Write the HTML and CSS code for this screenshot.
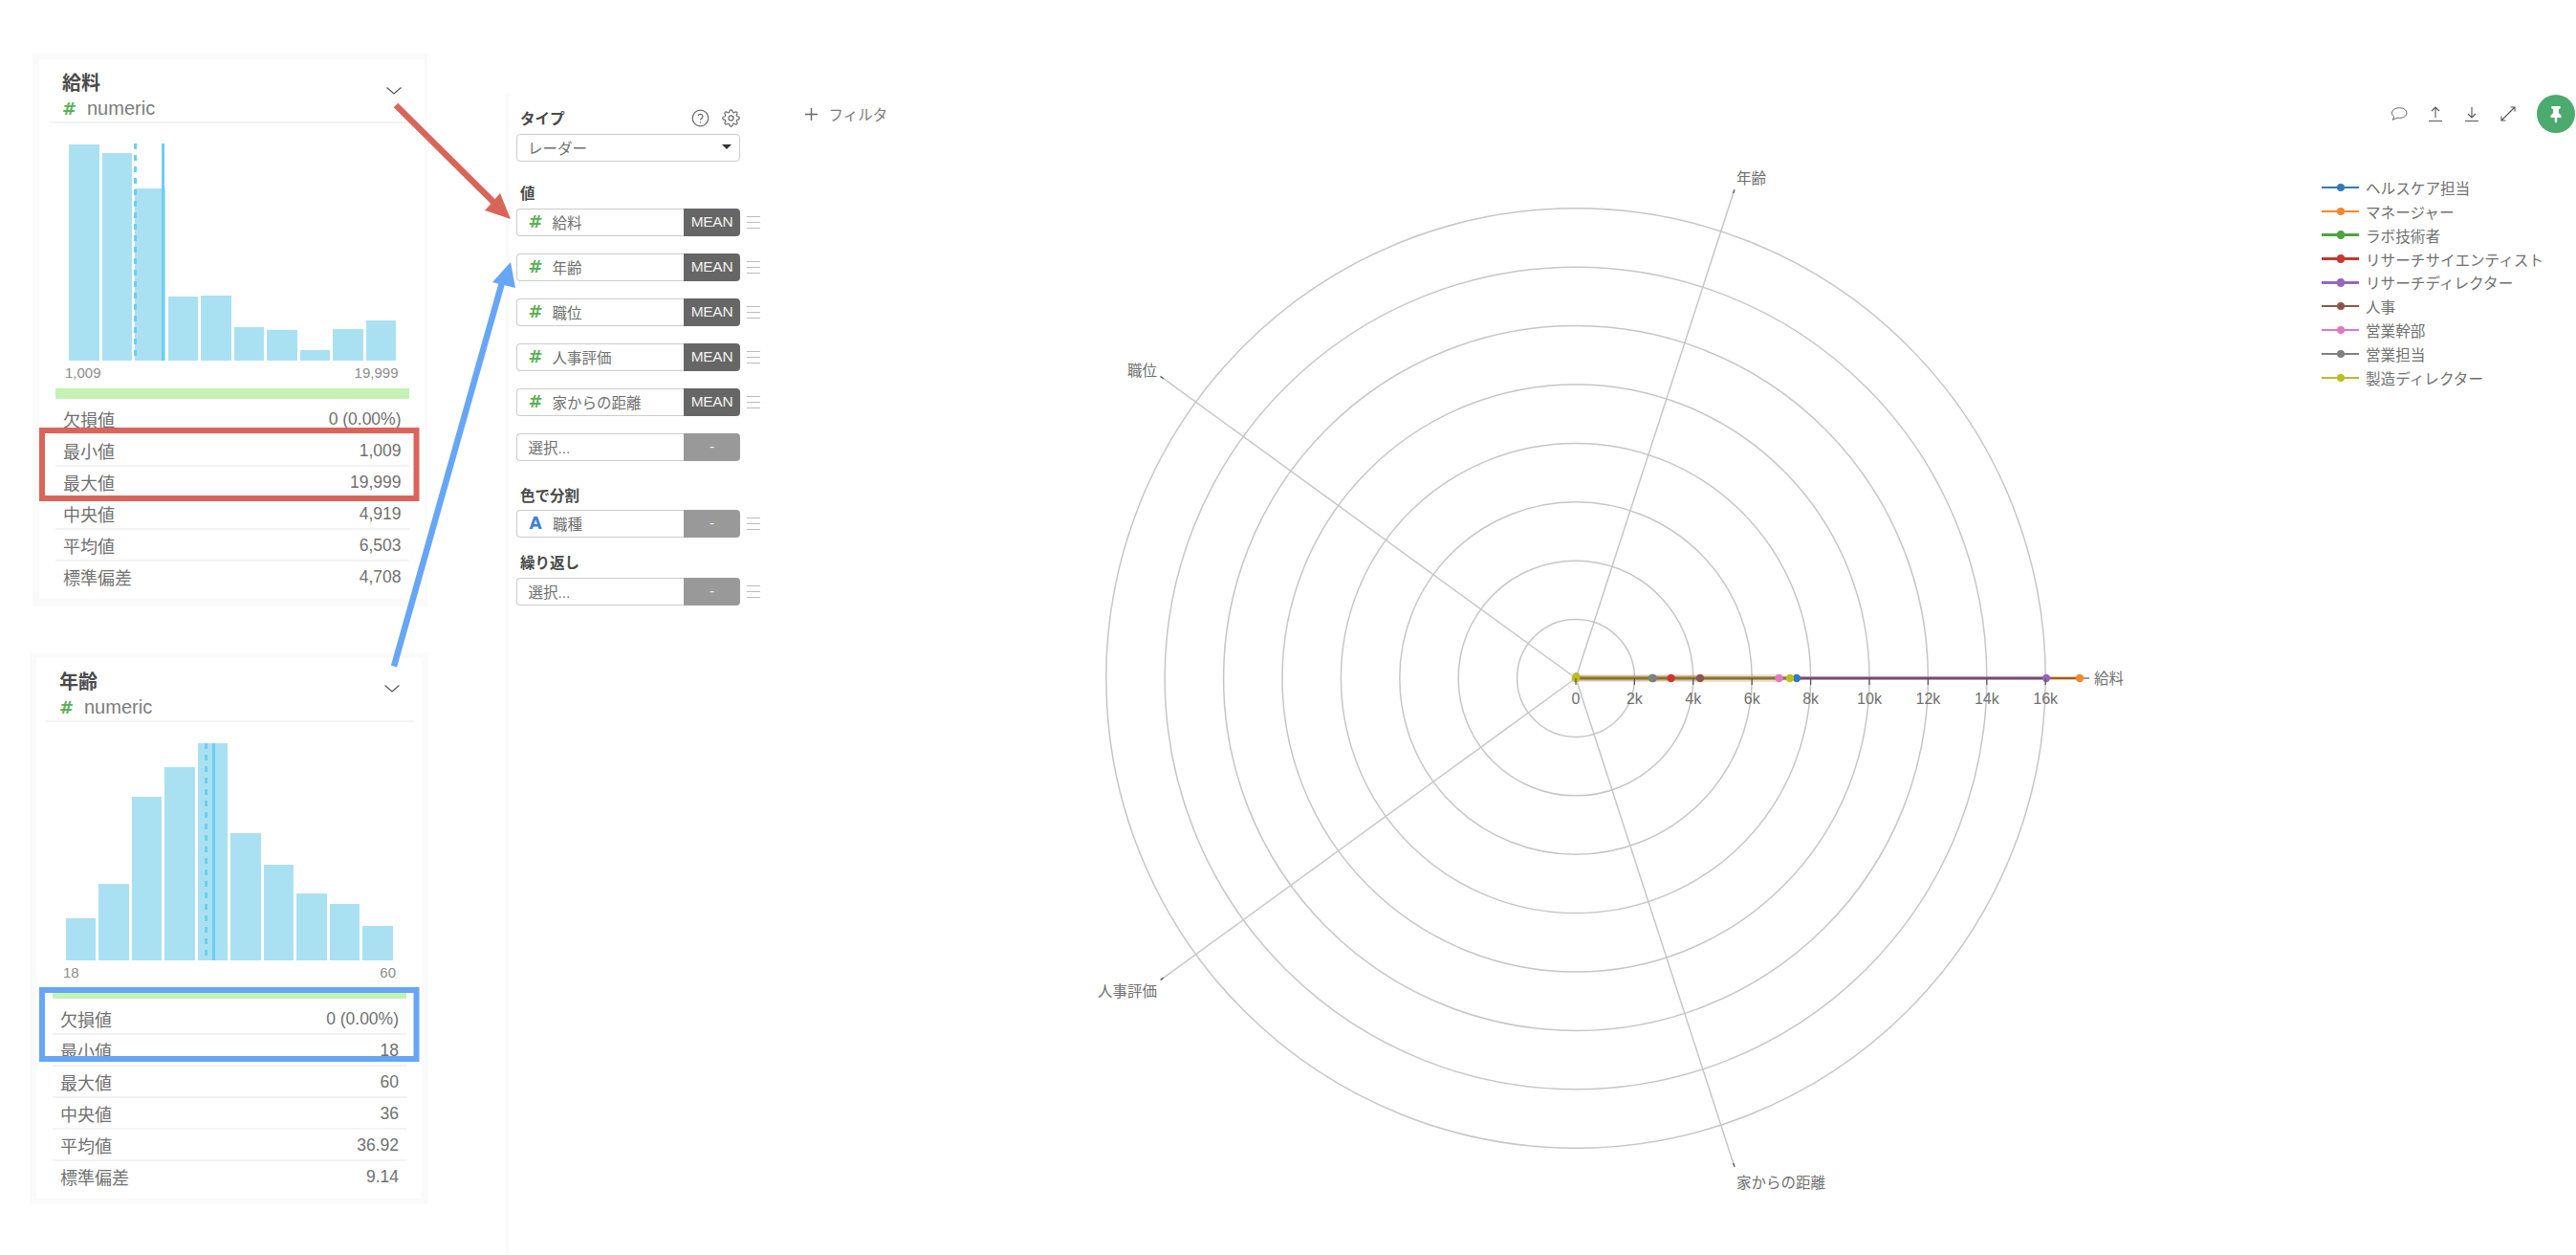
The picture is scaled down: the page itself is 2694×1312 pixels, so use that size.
FILE: index.html
```html
<!DOCTYPE html>
<html lang="ja">
<head>
<meta charset="utf-8">
<title>レーダー</title>
<link rel="stylesheet" href="styles.css">
</head>
<body>
<div class="page">
  <aside class="sidebar">
    <section class="card card-salary">
      <header class="card-head">
        <div class="card-heading">
          <div class="card-title">給料</div>
          <div class="card-type"><span class="hash">#</span><span>numeric</span></div>
        </div>
        <svg class="chevron" viewBox="0 0 16 8"><polyline points="0.5,0.5 8,7 15.5,0.5"/></svg>
      </header>
      <div class="hist">
        <i class="bar" style="height:226.5px"></i><i class="bar" style="height:216.7px"></i><i class="bar" style="height:180px"></i><i class="bar" style="height:67.3px"></i><i class="bar" style="height:68px"></i><i class="bar" style="height:34.7px"></i><i class="bar" style="height:31.8px"></i><i class="bar" style="height:11px"></i><i class="bar" style="height:33.5px"></i><i class="bar" style="height:41.6px"></i>
        <i class="mark-median" style="left:67.5px"></i><i class="mark-mean" style="left:96.5px"></i>
      </div>
      <div class="hist-range"><span>1,009</span><span>19,999</span></div>
      <div class="valid-bar"></div>
      <dl class="stats">
        <div class="stat"><dt>欠損値</dt><dd>0 (0.00%)</dd></div>
        <div class="stat"><dt>最小値</dt><dd>1,009</dd></div>
        <div class="stat"><dt>最大値</dt><dd>19,999</dd></div>
        <div class="stat"><dt>中央値</dt><dd>4,919</dd></div>
        <div class="stat"><dt>平均値</dt><dd>6,503</dd></div>
        <div class="stat"><dt>標準偏差</dt><dd>4,708</dd></div>
      </dl>
    </section>

    <section class="card card-age">
      <header class="card-head">
        <div class="card-heading">
          <div class="card-title">年齢</div>
          <div class="card-type"><span class="hash">#</span><span>numeric</span></div>
        </div>
        <svg class="chevron" viewBox="0 0 16 8"><polyline points="0.5,0.5 8,7 15.5,0.5"/></svg>
      </header>
      <div class="hist">
        <i class="bar" style="height:43.6px"></i><i class="bar" style="height:80px"></i><i class="bar" style="height:171px"></i><i class="bar" style="height:202px"></i><i class="bar" style="height:226.5px"></i><i class="bar" style="height:133px"></i><i class="bar" style="height:100px"></i><i class="bar" style="height:70px"></i><i class="bar" style="height:58.5px"></i><i class="bar" style="height:35.7px"></i>
        <i class="mark-median" style="left:145px"></i><i class="mark-mean" style="left:153px"></i>
      </div>
      <div class="hist-range"><span>18</span><span>60</span></div>
      <div class="valid-bar"></div>
      <dl class="stats">
        <div class="stat"><dt>欠損値</dt><dd>0 (0.00%)</dd></div>
        <div class="stat"><dt>最小値</dt><dd>18</dd></div>
        <div class="stat"><dt>最大値</dt><dd>60</dd></div>
        <div class="stat"><dt>中央値</dt><dd>36</dd></div>
        <div class="stat"><dt>平均値</dt><dd>36.92</dd></div>
        <div class="stat"><dt>標準偏差</dt><dd>9.14</dd></div>
      </dl>
    </section>
  </aside>

  <aside class="panel">
    <div class="panel-top">
      <span class="label">タイプ</span>
      <span class="panel-icons">
        <svg class="panel-icon" viewBox="0 0 24 24"><circle cx="12" cy="12" r="10.5"/><path d="M8.8 9a3.3 3.3 0 0 1 6.4 1c0 2.2-3.2 2.6-3.2 4.4"/><circle class="dot" cx="12" cy="17.6" r="0.9"/></svg>
        <svg class="panel-icon" viewBox="0 0 24 24"><circle cx="12" cy="12" r="3.2"/><path d="M19.4 15a1.65 1.65 0 0 0 .33 1.82l.06.06a2 2 0 0 1 0 2.83 2 2 0 0 1-2.83 0l-.06-.06a1.65 1.65 0 0 0-1.82-.33 1.65 1.65 0 0 0-1 1.51V21a2 2 0 0 1-2 2 2 2 0 0 1-2-2v-.09A1.65 1.65 0 0 0 9 19.4a1.65 1.65 0 0 0-1.82.33l-.06.06a2 2 0 0 1-2.83 0 2 2 0 0 1 0-2.83l.06-.06a1.65 1.65 0 0 0 .33-1.82 1.65 1.65 0 0 0-1.51-1H3a2 2 0 0 1-2-2 2 2 0 0 1 2-2h.09A1.65 1.65 0 0 0 4.6 9a1.65 1.65 0 0 0-.33-1.82l-.06-.06a2 2 0 0 1 0-2.83 2 2 0 0 1 2.83 0l.06.06a1.65 1.65 0 0 0 1.82.33H9a1.65 1.65 0 0 0 1-1.51V3a2 2 0 0 1 2-2 2 2 0 0 1 2 2v.09a1.65 1.65 0 0 0 1 1.51 1.65 1.65 0 0 0 1.82-.33l.06-.06a2 2 0 0 1 2.83 0 2 2 0 0 1 0 2.83l-.06.06a1.65 1.65 0 0 0-.33 1.82V9a1.65 1.65 0 0 0 1.51 1H21a2 2 0 0 1 2 2 2 2 0 0 1-2 2h-.09a1.65 1.65 0 0 0-1.51 1z"/></svg>
      </span>
    </div>
    <div class="select"><span>レーダー</span><i class="caret"></i></div>

    <div class="group group-values">
      <div class="label">値</div>
      <div class="fields">
        <div class="field-row"><div class="field"><div class="field-name"><span class="hash">#</span><span>給料</span></div><div class="agg">MEAN</div></div><i class="drag"></i></div>
        <div class="field-row"><div class="field"><div class="field-name"><span class="hash">#</span><span>年齢</span></div><div class="agg">MEAN</div></div><i class="drag"></i></div>
        <div class="field-row"><div class="field"><div class="field-name"><span class="hash">#</span><span>職位</span></div><div class="agg">MEAN</div></div><i class="drag"></i></div>
        <div class="field-row"><div class="field"><div class="field-name"><span class="hash">#</span><span>人事評価</span></div><div class="agg">MEAN</div></div><i class="drag"></i></div>
        <div class="field-row"><div class="field"><div class="field-name"><span class="hash">#</span><span>家からの距離</span></div><div class="agg">MEAN</div></div><i class="drag"></i></div>
        <div class="field-row"><div class="field"><div class="field-name"><span>選択...</span></div><div class="agg agg-empty">-</div></div></div>
      </div>
    </div>

    <div class="group group-color">
      <div class="label">色で分割</div>
      <div class="field-row"><div class="field"><div class="field-name"><span class="type-a">A</span><span>職種</span></div><div class="agg agg-empty">-</div></div><i class="drag"></i></div>
    </div>

    <div class="group group-repeat">
      <div class="label">繰り返し</div>
      <div class="field-row"><div class="field"><div class="field-name"><span>選択...</span></div><div class="agg agg-empty">-</div></div><i class="drag"></i></div>
    </div>
  </aside>

  <main class="main">
    <div class="toolbar">
      <div class="filter"><svg class="plus" viewBox="0 0 12 12"><path d="M6 0v12M0 6h12"/></svg><span>フィルタ</span></div>
      <div class="tools">
        <svg class="tool" viewBox="0 0 24 24"><path d="M12.5 4.5c5 0 9 2.8 9 6.4s-4 6.3-9 6.3c-1 0-2-.1-2.9-.3L4 19.6l1.6-4.1C3.800 14.300 3 12.800 3 10.900 3 7.300 7.500 4.500 12.500 4.500z"/></svg>
        <svg class="tool" viewBox="0 0 20 20"><path d="M3 17.500h14M10 14V3M6 7l4-4 4 4"/></svg>
        <svg class="tool" viewBox="0 0 20 20"><path d="M3 17.500h14M10 3v11M6 10l4 4 4-4"/></svg>
        <svg class="tool" viewBox="0 0 20 20"><path d="M3 17L17 3M12.500 3H17v4.500M3 12.500V17h4.500"/></svg>
        <div class="pin"><svg viewBox="0 0 24 24"><path d="M6.500 2.500h11v2.800l-2 .9v4.800l3.200 3v2.700h-5.200v4.600l-1.500 2.700-1.500-2.700v-4.600H5.300V14l3.200-3V6.200l-2-.9z"/></svg></div>
      </div>
    </div>
    <div class="chart-row">
      <svg class="radar" viewBox="0 0 1100 1100" width="1100" height="1100">
        <g class="rings">
          <circle cx="518" cy="549" r="61.400"/><circle cx="518" cy="549" r="122.800"/><circle cx="518" cy="549" r="184.200"/><circle cx="518" cy="549" r="245.600"/><circle cx="518" cy="549" r="307"/><circle cx="518" cy="549" r="368.400"/><circle cx="518" cy="549" r="429.800"/><circle cx="518" cy="549" r="491.200"/>
        </g>
        <g class="spokes">
          <line x1="518" y1="549" x2="683.900" y2="38.300"/>
          <line x1="518" y1="549" x2="83.600" y2="233.400"/>
          <line x1="518" y1="549" x2="83.600" y2="864.600"/>
          <line x1="518" y1="549" x2="683.900" y2="1059.700"/>
        </g>
        <g class="tips">
          <line x1="682.700" y1="42" x2="683.900" y2="38.300"/>
          <line x1="86.800" y1="235.700" x2="83.600" y2="233.400"/>
          <line x1="86.800" y1="862.300" x2="83.600" y2="864.600"/>
          <line x1="682.700" y1="1056" x2="683.900" y2="1059.700"/>
          <line x1="1048" y1="549" x2="1055" y2="549"/>
        </g>
        <g class="bands">
          <rect class="s7" x="518" y="545" width="212" height="8"/>
          <rect class="s9" x="518" y="545.500" width="224" height="7"/>
          <rect class="s6" x="518" y="546" width="130" height="6"/>
        </g>
        <g class="series">
          <line class="s2" x1="518" y1="549" x2="1045" y2="549"/>
          <line class="s1" x1="518" y1="549" x2="749" y2="549"/>
          <line class="s3" x1="518" y1="549" x2="598" y2="549"/>
          <line class="s4" x1="518" y1="549" x2="617.600" y2="549"/>
          <line class="s5" x1="518" y1="549" x2="1010" y2="549"/>
          <line class="s6" x1="518" y1="549" x2="648" y2="549"/>
          <line class="s7" x1="518" y1="549" x2="730.600" y2="549"/>
          <line class="s8" x1="518" y1="549" x2="598.700" y2="549"/>
          <line class="s9" x1="518" y1="549" x2="742" y2="549"/>
        </g>
        <line class="domain" x1="518" y1="549" x2="1045" y2="549"/>
        <g class="points">
          <circle class="s2" cx="1045" cy="549" r="4.200"/>
          <circle class="s1" cx="749" cy="549" r="4.200"/>
          <circle class="s3" cx="598" cy="549" r="4.200"/>
          <circle class="s4" cx="617.600" cy="549" r="4.200"/>
          <circle class="s5" cx="1010" cy="549" r="4.200"/>
          <circle class="s6" cx="648" cy="549" r="4.200"/>
          <circle class="s7" cx="730.600" cy="549" r="4.200"/>
          <circle class="s8" cx="598.700" cy="549" r="4.200"/>
          <circle class="s9" cx="742" cy="549" r="4.200"/>
          <circle class="s9" cx="518" cy="549" r="4.400"/>
          <circle class="s9" cx="518.500" cy="546.500" r="3.600"/>
        </g>
        <g class="ticks">
          <line x1="518" y1="549" x2="518" y2="556"/><line x1="579.400" y1="549" x2="579.400" y2="556"/><line x1="640.800" y1="549" x2="640.800" y2="556"/><line x1="702.200" y1="549" x2="702.200" y2="556"/><line x1="763.600" y1="549" x2="763.600" y2="556"/><line x1="825" y1="549" x2="825" y2="556"/><line x1="886.400" y1="549" x2="886.400" y2="556"/><line x1="947.800" y1="549" x2="947.800" y2="556"/><line x1="1009.200" y1="549" x2="1009.200" y2="556"/>
        </g>
        <g class="tick-labels">
          <text x="518" y="576">0</text><text x="579.400" y="576">2k</text><text x="640.800" y="576">4k</text><text x="702.200" y="576">6k</text><text x="763.600" y="576">8k</text><text x="825" y="576">10k</text><text x="886.400" y="576">12k</text><text x="947.800" y="576">14k</text><text x="1009.200" y="576">16k</text>
        </g>
        <g class="axis-labels">
          <text x="1060" y="554.500">給料</text>
          <text x="686" y="31.500">年齢</text>
          <text class="end" x="80" y="233">職位</text>
          <text class="end" x="80" y="881.500">人事評価</text>
          <text x="686" y="1082">家からの距離</text>
        </g>
      </svg>
      <ul class="legend">
        <li class="s1"><i class="key"></i>ヘルスケア担当</li>
        <li class="s2"><i class="key"></i>マネージャー</li>
        <li class="s3"><i class="key"></i>ラボ技術者</li>
        <li class="s4"><i class="key"></i>リサーチサイエンティスト</li>
        <li class="s5"><i class="key"></i>リサーチディレクター</li>
        <li class="s6"><i class="key"></i>人事</li>
        <li class="s7"><i class="key"></i>営業幹部</li>
        <li class="s8"><i class="key"></i>営業担当</li>
        <li class="s9"><i class="key"></i>製造ディレクター</li>
      </ul>
    </div>
  </main>

  <svg class="annotations" viewBox="0 0 2694 1312" width="2694" height="1312">
    <rect class="box-red" x="44" y="450" width="391.500" height="71"/>
    <rect class="box-blue" x="44" y="1035" width="391.500" height="72"/>
    <line class="arrow-red" x1="414" y1="110" x2="520" y2="215"/>
    <polygon class="head-red" points="534,229 507,220 523,202"/>
    <line class="arrow-blue" x1="412" y1="696.500" x2="526" y2="292"/>
    <polygon class="head-blue" points="534,274 515,295 539,301"/>
  </svg>
</div>
</body>
</html>
```
FILE: styles.css
```css
* { box-sizing: border-box; }
html, body { margin: 0; padding: 0; background: #fff; }
body {
  font-family: "Liberation Sans", "Noto Sans CJK JP", sans-serif;
  color: #707070;
}
.page {
  position: relative;
  display: flex;
  width: 2694px;
  height: 1312px;
  overflow: hidden;
}

/* column summary cards */
.sidebar { flex: 0 0 529px; padding-top: 56px; }
.card { border: solid #fafafa; background: #fff; padding-bottom: 6px; }
.card-salary { width: 412.5px; margin-left: 34px; border-width: 6px 3.5px 8px 7.5px; }
.card-age { width: 417px; margin: 48px 0 0 31px; border-width: 6px 7px; }
.card-head {
  display: flex;
  align-items: center;
  justify-content: space-between;
  height: 67px;
  margin: 0 10px;
  padding: 12px 12px 0 14px;
  border-bottom: 2px solid #f3f3f3;
}
.card-salary .card-head { margin-right: 12px; }
.card-age .card-head { margin-right: 9px; padding-right: 14px; }
.card-title { font-size: 20px; line-height: 26px; font-weight: 700; color: #4a4a4a; }
.card-type { display: flex; align-items: center; height: 27px; font-size: 20px; color: #7c7c7c; }
.card-type .hash { width: 26px; }
.hash { font-family: "DejaVu Sans", sans-serif; font-weight: 700; font-size: 18px; color: #5cb058; }
.chevron { width: 16px; height: 8px; margin-top: -12px; fill: none; stroke: #555; stroke-width: 1.2; }

.hist { position: relative; display: flex; align-items: flex-end; gap: 3px; height: 227px; }
.card-salary .hist { margin: 21px 0 0 31px; }
.card-age .hist { margin: 22px 0 0 30.600px; }
.bar { flex: 0 0 31.5px; background: #aae1f2; }
.mark-median, .mark-mean { position: absolute; top: 0; bottom: 0; width: 3px; }
.mark-median { background: repeating-linear-gradient(#6dcef0 0 6px, transparent 6px 12px); }
.mark-mean { background: #6dcef0; }
.hist-range { display: flex; justify-content: space-between; height: 18px; margin-top: 4px; font-size: 15px; line-height: 18px; color: #8c8c8c; }
.card-salary .hist-range { margin-left: 27px; margin-right: 27px; }
.card-age .hist-range { margin-left: 28px; margin-right: 27px; }
.valid-bar { height: 11.5px; margin: 6.500px 16px 0 17px; background: #c2f3b5; }
.stats { margin: 4.5px 16px 0 17px; font-size: 18px; }
.card-age .stats { margin-top: 5px; }
.stat { display: flex; justify-content: space-between; align-items: center; height: 33px; padding: 2px 8px 0; border-bottom: 2px solid #f3f3f3; }
.stat:last-child { padding-top: 0; border-bottom: 0; }
.stat dt, .stat dd { margin: 0; }
.stat dd { font-size: 17.500px; }

/* chart settings panel */
.panel {
  flex: 0 0 300px;
  margin-top: 97px;
  padding: 14px 0 0 7px;
  border-left: 4px solid #fafafa;
}
.panel-top { display: flex; justify-content: space-between; align-items: center; width: 234px; }
.label { display: block; height: 24px; padding: 1.500px 0 0 4px; font-size: 15.500px; line-height: 24px; font-weight: 700; color: #4a4a4a; }
.panel-icons { display: flex; gap: 13px; }
.panel-icon { width: 19px; height: 19px; fill: none; stroke: #666; stroke-width: 1.500; }
.panel-icon .dot { fill: #666; stroke: none; }
.select {
  display: flex;
  align-items: center;
  justify-content: space-between;
  width: 234px;
  height: 29px;
  margin-top: 5px;
  padding: 0 8px 2px 11px;
  border: 1.500px solid #ccc;
  border-radius: 4px;
  font-size: 15.500px;
}
.caret { width: 0; height: 0; border: 5px solid transparent; border-top: 5.500px solid #333; border-bottom: 0; }
.group-values { margin-top: 20px; }
.group-values .label { margin-bottom: 5px; }
.group-color { margin-top: 23px; }
.group-color .label { margin-bottom: 4px; }
.group-repeat { margin-top: 13px; }
.group-repeat .label { margin-bottom: 5px; }
.fields { display: flex; flex-direction: column; gap: 18px; }
.field-row { display: flex; align-items: center; gap: 7px; height: 29px; }
.field { display: flex; flex: 0 0 234px; height: 29px; }
.field-name {
  display: flex;
  align-items: center;
  flex: 1;
  padding: 0 0 2px 11.500px;
  border: 1.500px solid #ccc;
  border-right: 0;
  border-radius: 4px 0 0 4px;
  font-size: 15.500px;
}
.field-name .hash { width: 25px; }
.type-a { width: 25.500px; padding-left: 1px; font-family: "DejaVu Sans", sans-serif; font-weight: 700; font-size: 17px; color: #3a82d0; }
.agg {
  display: flex;
  align-items: center;
  justify-content: center;
  flex: 0 0 59px;
  padding-bottom: 1px;
  border-radius: 0 4px 4px 0;
  background: #666;
  color: #f2f2f2;
  font-size: 15.500px;
  letter-spacing: -0.3px;
}
.agg-empty { background: #999; }
.drag { position: relative; display: block; width: 14px; height: 13px; border-top: 1.300px solid #bbb; border-bottom: 1.300px solid #bbb; }
.drag::before { content: ""; position: absolute; left: 0; right: 0; top: 4.600px; height: 1.300px; background: #bbb; }

/* chart area */
.main { flex: 1; min-width: 0; }
.toolbar { display: flex; justify-content: space-between; align-items: center; height: 160px; padding: 99px 1px 21px 12.500px; }
.filter { display: flex; align-items: center; gap: 12px; font-size: 15.500px; color: #7c7c7c; }
.plus { width: 13px; height: 13px; fill: none; stroke: #666; stroke-width: 1.300; }
.tools { display: flex; align-items: center; gap: 18px; }
.tool { width: 20px; height: 20px; fill: none; stroke: #555; stroke-width: 1.100; }
.pin { display: flex; align-items: center; justify-content: center; width: 40px; height: 40px; margin-left: 2px; border-radius: 50%; background: #4caa6e; }
.pin svg { width: 20px; height: 20px; fill: #fff; }

.chart-row { display: flex; align-items: flex-start; }
.radar { flex: none; margin-left: 301px; display: block; font-family: "Liberation Sans", "Noto Sans CJK JP", sans-serif; }
.rings circle { fill: none; stroke: #c6c6c6; stroke-width: 1.500; }
.spokes line { stroke: #c6c6c6; stroke-width: 1.500; }
.tips line, .ticks line { stroke: #555; stroke-width: 1.200; }
.domain { stroke: #3a3a3a; stroke-width: 1; }
.tick-labels text { font-size: 16px; fill: #707070; text-anchor: middle; }
.axis-labels text { font-size: 15.500px; fill: #707070; }
.axis-labels .end { text-anchor: end; }
.bands rect { opacity: 0.2; stroke: none; }
.series line { stroke-width: 3; }

.s1 { --c: #337ab7; } .s2 { --c: #f5872b; } .s3 { --c: #4fa33b; }
.s4 { --c: #c9372e; } .s5 { --c: #9467bd; } .s6 { --c: #8c564b; }
.s7 { --c: #e377c2; } .s8 { --c: #7f7f7f; } .s9 { --c: #bcbd22; }
.series line { stroke: var(--c); }
.points circle, .bands rect { fill: var(--c); }

.legend { flex: none; margin: 23.600px 0 0 198px; padding: 0; list-style: none; font-size: 15.600px; }
.legend li { display: flex; align-items: center; gap: 7px; height: 24.850px; white-space: nowrap; }
.key { position: relative; display: block; width: 39px; height: 2.500px; background: var(--c); }
.key::after { content: ""; position: absolute; left: 15.500px; top: -3px; width: 8.500px; height: 8.500px; border-radius: 50%; background: var(--c); }

/* red and blue callouts drawn over the screen */
.annotations { position: absolute; left: 0; top: 0; pointer-events: none; }
.box-red, .box-blue { fill: none; stroke-width: 6; }
.box-red { stroke: #d9655a; }
.box-blue { stroke: #67a6f5; }
.arrow-red { stroke: #d9655a; stroke-width: 6.500; }
.head-red { fill: #d9655a; }
.arrow-blue { stroke: #67a6f5; stroke-width: 6.500; }
.head-blue { fill: #67a6f5; }
```
